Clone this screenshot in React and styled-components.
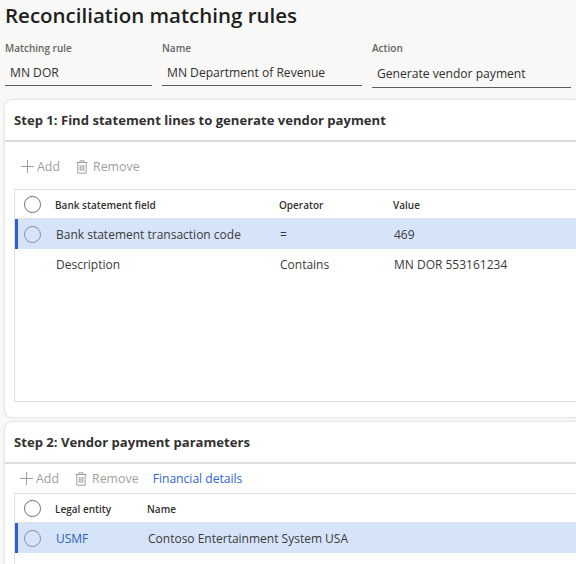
import React from "react";
import styled, { createGlobalStyle } from "styled-components";

const Global = createGlobalStyle`
  html, body { margin: 0; padding: 0; background: #f8f8f7; }
  body { font-family: "Open Sans", "Noto Sans", "Liberation Sans", sans-serif; color: #323130; }
`;
const Page = styled.div`
  width: 576px; height: 564px; overflow: hidden; box-sizing: border-box;
  display: flex; flex-direction: column; padding-left: 5px;
`;
const Title = styled.h1`
  margin: 0; height: 31px; flex: none; font-size: 20.5px; line-height: 31px; font-weight: 600; color: #201f1e;
`;
const Fields = styled.div`
  display: flex; flex: none; gap: 10px; margin-top: 10px; height: 59px;
`;
const Field = styled.div`
  width: ${p => p.$w}px; display: flex; flex-direction: column;
`;
const FieldLabel = styled.div`
  font-size: 10px; line-height: 14px; font-weight: 600; color: #66645f;
`;
const FieldValue = styled.div`
  margin-top: ${p => p.$low ? 9 : 8}px; height: ${p => p.$low ? 23 : 22}px; padding-left: 5px; font-size: 12.1px; line-height: 20px;
  border-bottom: 1px solid #605e5c; color: #323130;
`;
const Card = styled.section`
  background: #fff; border-radius: 7px 0 0 7px;
  box-shadow: 0 0 3px rgba(0,0,0,.18);
  height: ${p => p.$h}px; margin-top: ${p => p.$mt}px; display: flex; flex-direction: column; flex: none;
`;
const CardHeader = styled.h2`
  margin: 0; height: ${p => p.$h}px; flex: none; box-sizing: border-box; border-bottom: 2px solid #dcdbd9;
  padding-left: 9px; font-size: 13.1px; line-height: ${p => p.$h - 2}px; font-weight: 700; color: #323130;
`;
const Toolbar = styled.div`
  display: flex; align-items: center; height: ${p => p.$h}px; padding-left: ${p => p.$pl}px;
  font-size: 12.4px; flex: none; padding-top: ${p => p.$pt || 0}px; box-sizing: border-box;
`;
const ToolItem = styled.span`
  display: inline-flex; align-items: center; gap: ${p => p.$gap || 2}px; margin-right: ${p => p.$mr}px;
  color: #a19f9d;
`;
const ToolLink = styled.span`
  color: #2f66d0; font-size: 12.1px;
`;
const Grid = styled.div`
  margin-left: 9px; border: 1px solid #e1dfdd; border-right: 0; flex: 1; min-height: 0; overflow: hidden;
  margin-bottom: ${p => p.$mb || 0}px;
`;
const Row = styled.div`
  display: grid; grid-template-columns: ${p => p.$cols}; align-items: center;
  height: ${p => p.$h || 30}px; box-sizing: border-box;
  background: ${p => p.$sel ? "#d6e4f9" : "transparent"};
  border-left: 3px solid ${p => p.$sel ? "#2a5fd6" : "transparent"};
  font-size: 12px; color: #3b3a39;
  ${p => p.$head && `border-bottom: 1px solid #e1dfdd; font-size: 10px; font-weight: 600; color: #323130; padding-top: 2px;`}
`;
const Radio = styled.span`
  width: 17px; height: 17px; border-radius: 50%; box-sizing: border-box; justify-self: start; margin-left: 6px;
  border: 1.5px solid ${p => p.$sel ? "#858c98" : "#6f6d6b"};
  ${p => !p.$sel && "margin-top: -2px;"}
`;
const Link = styled.span` color: #2f5fb8; `;
const HeadCell = styled.span` margin-left: -1px; `;

const Plus = () => (
  <svg width="15" height="15" viewBox="0 0 15 15" fill="none" stroke="#a19f9d" strokeWidth="1">
    <path d="M7.5 1v13M1 7.5h13" />
  </svg>
);
const Trash = () => (
  <svg width="12" height="14" viewBox="0 0 12 14" fill="none" stroke="#a19f9d" strokeWidth="1">
    <path d="M.5 2.5h11M4 2.5V.8h4v1.7M1.8 2.5v10.7h8.4V2.5M4.2 5v5.8M6 5v5.8M7.8 5v5.8" />
  </svg>
);

const c1 = "38px 224px 114px 1fr";
const c2 = "38px 92px 1fr";

export default function App() {
  return (
    <Page>
      <Global />
      <Title>Reconciliation matching rules</Title>
      <Fields>
        <Field $w={147}><FieldLabel>Matching rule</FieldLabel><FieldValue>MN DOR</FieldValue></Field>
        <Field $w={200}><FieldLabel>Name</FieldLabel><FieldValue>MN Department of Revenue</FieldValue></Field>
        <Field $w={199}><FieldLabel>Action</FieldLabel><FieldValue $low>Generate vendor payment</FieldValue></Field>
      </Fields>
      <Card $h={317} $mt={0}>
        <CardHeader $h={42}>Step 1: Find statement lines to generate vendor payment</CardHeader>
        <Toolbar $h={47} $pl={15} $pt={2}>
          <ToolItem $mr={16}><Plus />Add</ToolItem>
          <ToolItem $mr={0} $gap={5}><Trash />Remove</ToolItem>
        </Toolbar>
        <Grid $mb={15}>
          <Row $head $h={29} $cols={c1}><Radio /><HeadCell>Bank statement field</HeadCell><HeadCell>Operator</HeadCell><HeadCell>Value</HeadCell></Row>
          <Row $sel $cols={c1}><Radio $sel /><span>Bank statement transaction code</span><span>=</span><span>469</span></Row>
          <Row $cols={c1}><span /><span>Description</span><span>Contains</span><span>MN DOR 553161234</span></Row>
        </Grid>
      </Card>
      <Card $h={150} $mt={5}>
        <CardHeader $h={42}>Step 2: Vendor payment parameters</CardHeader>
        <Toolbar $h={29} $pl={14}>
          <ToolItem $mr={16}><Plus />Add</ToolItem>
          <ToolItem $mr={14} $gap={5}><Trash />Remove</ToolItem>
          <ToolLink>Financial details</ToolLink>
        </Toolbar>
        <Grid>
          <Row $head $h={29} $cols={c2}><Radio /><HeadCell>Legal entity</HeadCell><HeadCell>Name</HeadCell></Row>
          <Row $sel $cols={c2}><Radio $sel /><Link>USMF</Link><span>Contoso Entertainment System USA</span></Row>
        </Grid>
      </Card>
    </Page>
  );
}
